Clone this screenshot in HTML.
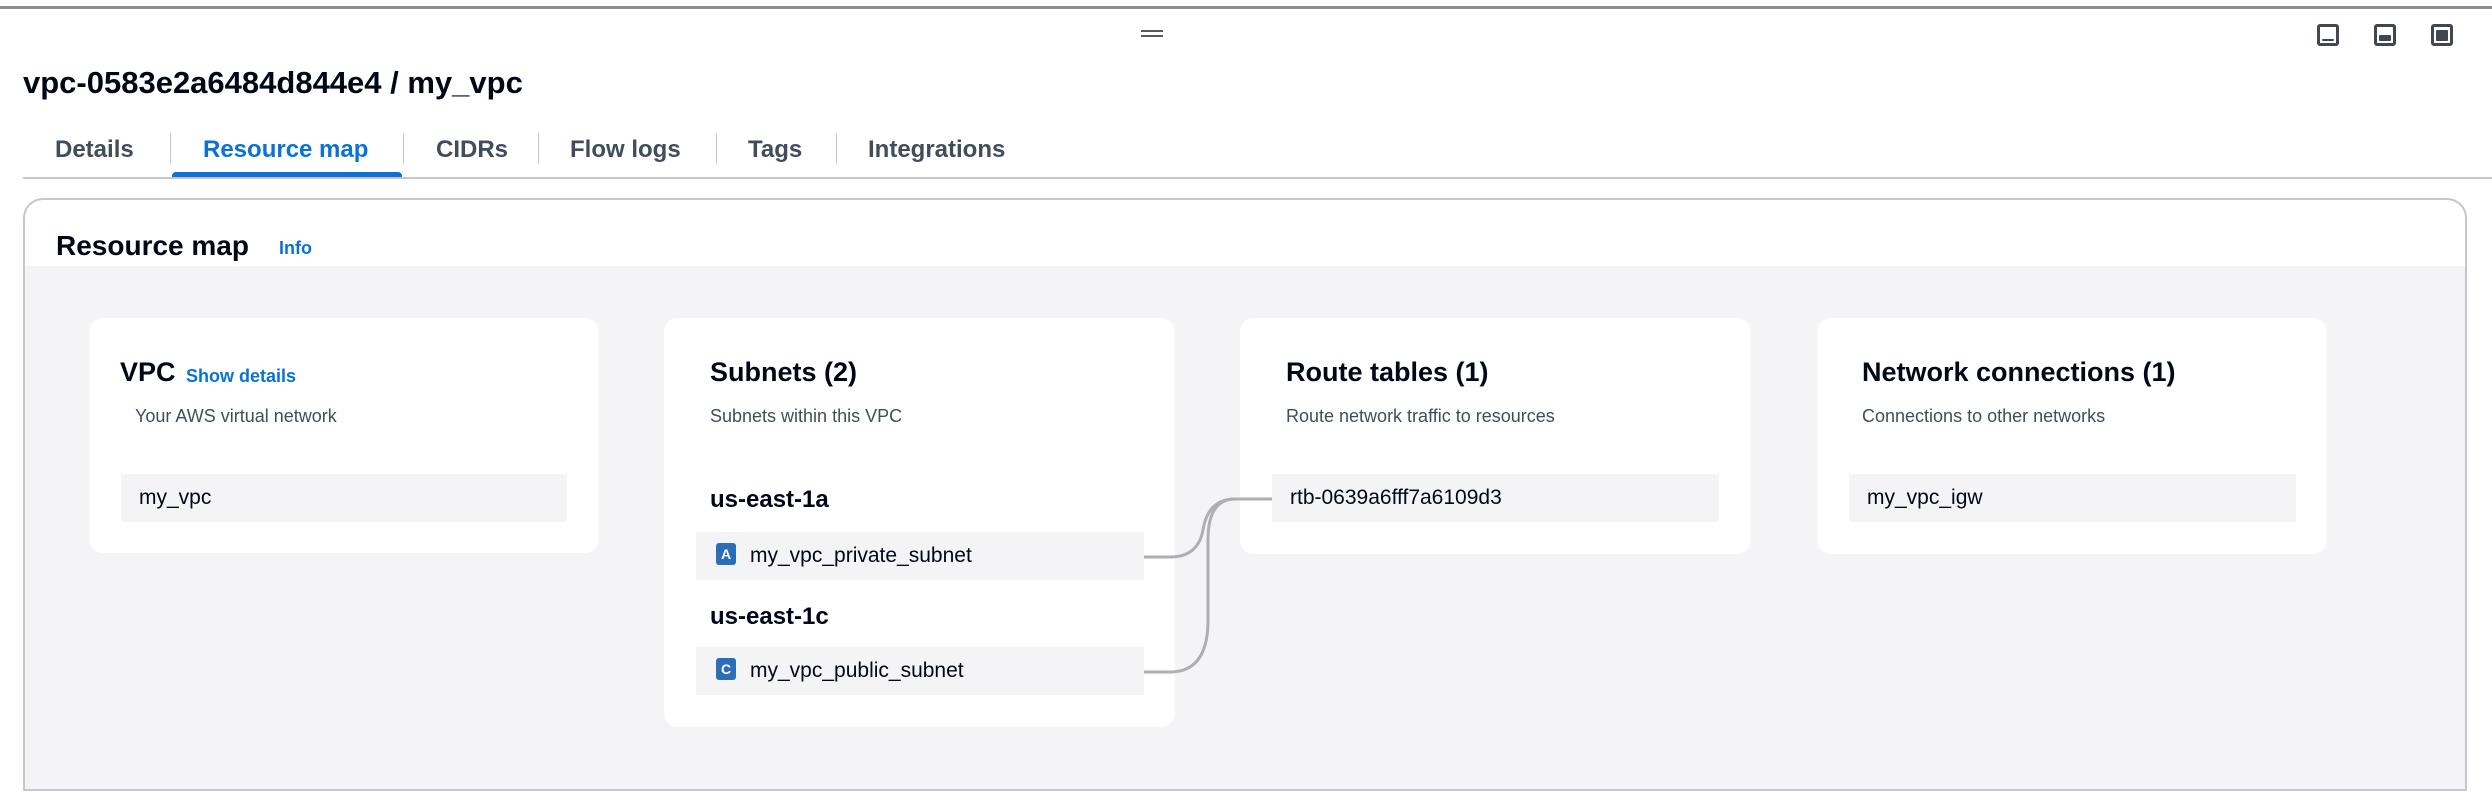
<!DOCTYPE html>
<html><head><meta charset="utf-8"><style>
*{margin:0;padding:0;box-sizing:border-box}
body{width:2492px;height:802px;background:#fff;font-family:"Liberation Sans",sans-serif;color:#000716;position:relative;overflow:hidden}
.a{position:absolute;white-space:nowrap}
.tab{position:absolute;top:136px;font-size:24px;font-weight:bold;color:#414d5c}
.sep{position:absolute;top:133px;width:1px;height:31px;background:#c6c6cd}
.card{position:absolute;top:318px;background:#fff;border-radius:14px}
.h{position:absolute;font-size:27px;font-weight:bold;color:#000716}
.d{position:absolute;font-size:18px;color:#414d5c}
.it{position:absolute;height:48px;background:#f4f4f6;font-size:21px;color:#000716;line-height:48px;padding-left:18px}
.ic{position:absolute;top:24px;width:22px;height:22px;border:3px solid #424650;border-radius:3px}
.ic i{position:absolute;left:2px;right:2px;bottom:2px;background:#424650;border-radius:1px}
.bd{display:inline-block;width:20px;height:22px;background:#2a6eb8;color:#fff;font-size:14px;font-weight:bold;line-height:22px;text-align:center;border-radius:3px;margin-right:14px;vertical-align:middle;position:relative;top:-2px}
</style></head><body>
<div class="a" style="left:0;top:6px;width:2492px;height:3px;background:#8c8c94"></div>
<div class="a" style="left:1141px;top:30px;width:22px;height:2px;background:#545b64"></div>
<div class="a" style="left:1141px;top:35px;width:22px;height:2px;background:#545b64"></div>
<div class="ic" style="left:2317px"><i style="top:12px"></i></div>
<div class="ic" style="left:2374px"><i style="top:8px"></i></div>
<div class="ic" style="left:2431px"><i style="top:3px"></i></div>
<div class="a" style="left:23px;top:65px;font-size:31px;font-weight:bold">vpc-0583e2a6484d844e4 / my_vpc</div>
<div class="tab" style="left:55px">Details</div>
<div class="sep" style="left:170px"></div>
<div class="tab" style="left:203px;color:#0972d3">Resource map</div>
<div class="a" style="left:172px;top:172px;width:230px;height:6px;background:#0972d3;border-radius:4px 4px 0 0"></div>
<div class="sep" style="left:403px"></div>
<div class="tab" style="left:436px">CIDRs</div>
<div class="sep" style="left:538px"></div>
<div class="tab" style="left:570px">Flow logs</div>
<div class="sep" style="left:716px"></div>
<div class="tab" style="left:748px">Tags</div>
<div class="sep" style="left:836px"></div>
<div class="tab" style="left:868px">Integrations</div>
<div class="a" style="left:23px;top:177px;width:2469px;height:2px;background:#c6c6cd"></div>
<div class="a" style="left:23px;top:198px;width:2444px;height:593px;border:2px solid #c6c6cd;border-radius:20px 20px 0 0;overflow:hidden">
<div class="a" style="left:0;top:66px;width:2444px;height:530px;background:#f4f4f6"></div>
</div>
<div class="a" style="left:56px;top:230px;font-size:28px;font-weight:bold">Resource map</div>
<div class="a" style="left:279px;top:238px;font-size:18px;font-weight:bold;color:#0972d3">Info</div>

<div class="card" style="left:89px;width:510px;height:235px"></div>
<div class="h" style="left:120px;top:357px">VPC</div>
<div class="a" style="left:186px;top:366px;font-size:18px;font-weight:bold;color:#0972d3">Show details</div>
<div class="d" style="left:135px;top:406px">Your AWS virtual network</div>
<div class="it" style="left:121px;top:474px;width:446px">my_vpc</div>

<div class="card" style="left:664px;width:511px;height:409px"></div>
<div class="h" style="left:710px;top:357px">Subnets (2)</div>
<div class="d" style="left:710px;top:406px">Subnets within this VPC</div>
<div class="a" style="left:710px;top:486px;font-size:24px;font-weight:bold">us-east-1a</div>
<div class="it" style="left:696px;top:532px;width:448px;padding-left:20px"><span class="bd">A</span>my_vpc_private_subnet</div>
<div class="a" style="left:710px;top:603px;font-size:24px;font-weight:bold">us-east-1c</div>
<div class="it" style="left:696px;top:647px;width:448px;padding-left:20px"><span class="bd">C</span>my_vpc_public_subnet</div>

<div class="card" style="left:1240px;width:511px;height:236px"></div>
<div class="h" style="left:1286px;top:357px">Route tables (1)</div>
<div class="d" style="left:1286px;top:406px">Route network traffic to resources</div>
<div class="it" style="left:1272px;top:474px;width:447px">rtb-0639a6fff7a6109d3</div>

<div class="card" style="left:1817px;width:510px;height:236px"></div>
<div class="h" style="left:1862px;top:357px">Network connections (1)</div>
<div class="d" style="left:1862px;top:406px">Connections to other networks</div>
<div class="it" style="left:1849px;top:474px;width:447px">my_vpc_igw</div>

<svg class="a" style="left:0;top:0" width="2492" height="802">
<path d="M1144 557 H1170 Q1198 557 1203 530 Q1208 499 1235 499 H1272" fill="none" stroke="#aeaeb4" stroke-width="3"/>
<path d="M1144 672 H1170 Q1208 672 1208 620 V540 Q1208 499 1235 499 H1272" fill="none" stroke="#aeaeb4" stroke-width="3"/>
</svg>
</body></html>
